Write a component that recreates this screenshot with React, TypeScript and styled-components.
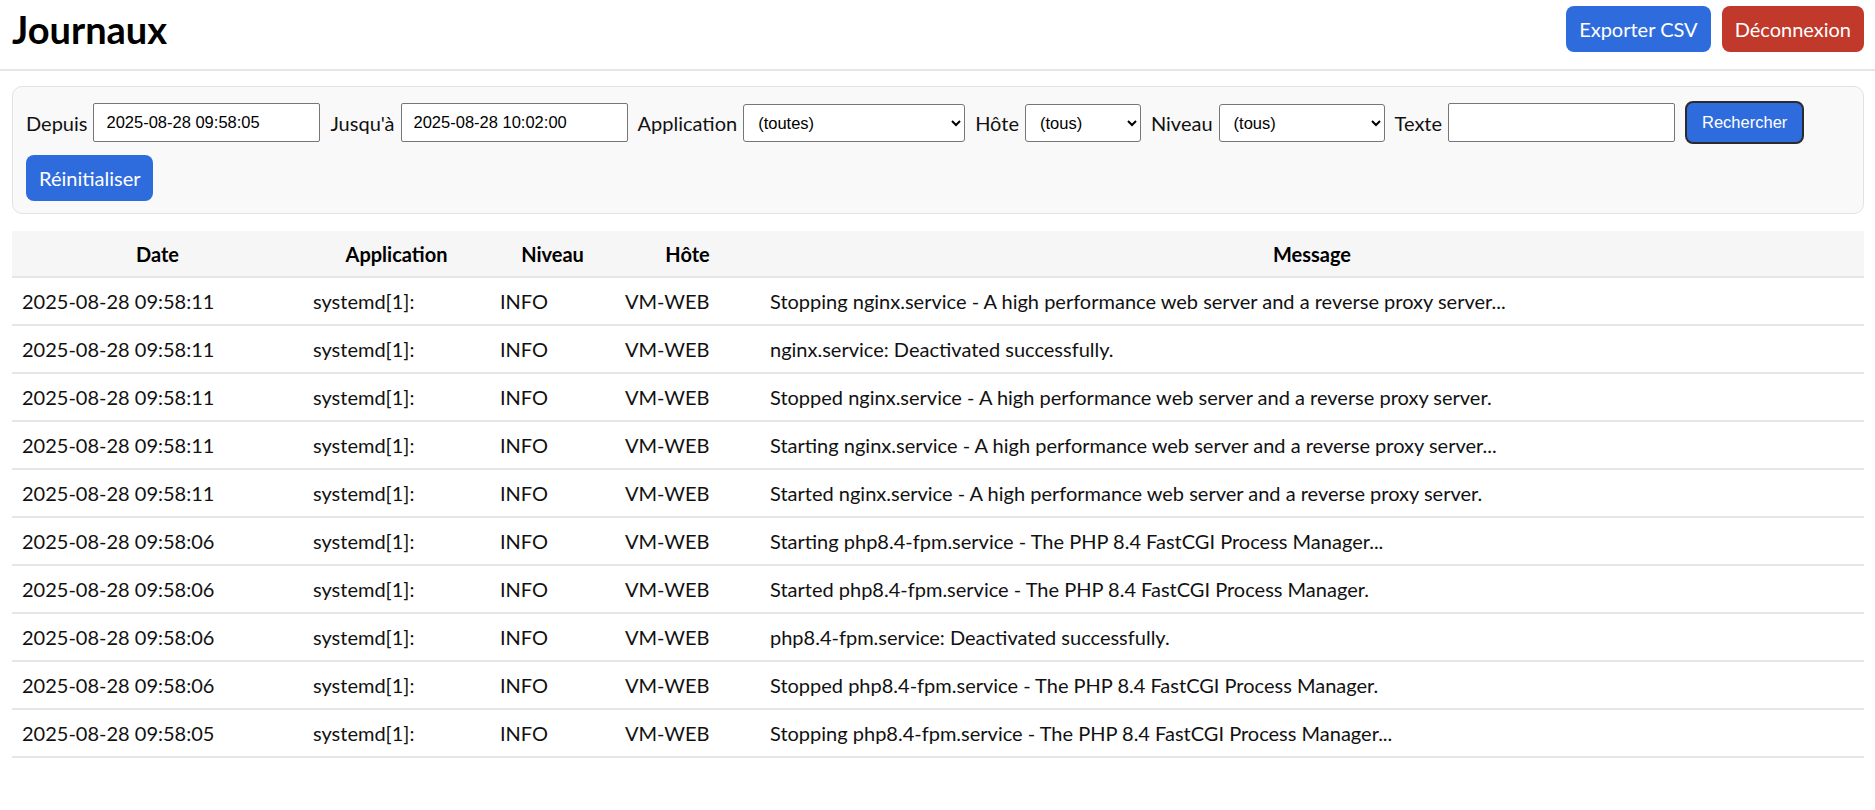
import React, { useState } from "react";
import styled, { createGlobalStyle } from "styled-components";

const GlobalStyle = createGlobalStyle`
  * { box-sizing: border-box; }
  body {
    margin: 0;
    background: #fff;
    color: #111;
    font-family: Lato, "Noto Sans", "Liberation Sans", sans-serif;
    font-size: 20px;
  }
`;

const Page = styled.div`
  padding: 0 11px 0 12px;
`;

const Header = styled.header`
  display: flex;
  align-items: center;
  justify-content: space-between;
  height: 71px;
  padding: 0 11px 11px 12px;
  margin: 0 -11px 0 -12px;
  border-bottom: 2px solid #e6e6e6;
`;

const Title = styled.h1`
  margin: 0;
  font-size: 38px;
  font-weight: 700;
  color: #000;
`;

const Actions = styled.div`
  display: flex;
  gap: 11px;
`;

const Button = styled.button<{ $tone?: "blue" | "red" }>`
  height: 46px;
  padding: 0 13px;
  border: none;
  border-radius: 8px;
  background: ${(p) => (p.$tone === "red" ? "#c0392b" : "#2e6cde")};
  color: #fff;
  font-family: inherit;
  font-size: 20px;
  cursor: pointer;
`;

const Panel = styled.section`
  margin-top: 15px;
  padding: 14px 13px 12px;
  background: #f9f9f9;
  border: 1px solid #e2e2e2;
  border-radius: 10px;
`;

const Filters = styled.form`
  display: flex;
  flex-wrap: wrap;
  align-items: center;
  column-gap: 10px;
  row-gap: 11px;
`;

const Field = styled.label`
  display: flex;
  align-items: center;
  gap: 6px;
`;

const TextInput = styled.input<{ $w: number }>`
  width: ${(p) => p.$w}px;
  height: 39px;
  padding: 0 12px;
  border: 1px solid #767676;
  border-radius: 2px;
  background: #fff;
  font-family: "Liberation Sans", Arial, sans-serif;
  font-size: 16.5px;
  color: #000;
`;

const Select = styled.select<{ $w: number }>`
  width: ${(p) => p.$w}px;
  height: 38px;
  padding: 0 10px;
  border: 1px solid #767676;
  border-radius: 3px;
  background: #fff;
  font-family: "Liberation Sans", Arial, sans-serif;
  font-size: 16.5px;
  color: #000;
`;

const SearchButton = styled.button`
  height: 43px;
  padding: 0 15px;
  border: 2px solid #2b2b2b;
  border-radius: 8px;
  background: #2e6cde;
  color: #fff;
  font-family: "Liberation Sans", Arial, sans-serif;
  font-size: 16.5px;
  cursor: pointer;
`;

const Table = styled.table`
  width: 100%;
  margin-top: 17px;
  border-collapse: collapse;
  table-layout: fixed;
`;

const HeadCell = styled.th`
  height: 46px;
  padding: 0 10px;
  background: #f6f6f6;
  border-bottom: 2px solid #e6e6e6;
  font-weight: 700;
  text-align: center;
  color: #000;
`;

const Row = styled.tr`
  border-bottom: 2px solid #e6e6e6;
`;

const Cell = styled.td`
  height: 48px;
  padding: 0 10px;
  white-space: nowrap;
  overflow: hidden;
  text-overflow: ellipsis;
  color: #111;
`;

const columns = [
  { label: "Date", width: 291 },
  { label: "Application", width: 187 },
  { label: "Niveau", width: 125 },
  { label: "Hôte", width: 145 },
  { label: "Message", width: undefined },
];

const logs = [
  ["2025-08-28 09:58:11", "Stopping nginx.service - A high performance web server and a reverse proxy server..."],
  ["2025-08-28 09:58:11", "nginx.service: Deactivated successfully."],
  ["2025-08-28 09:58:11", "Stopped nginx.service - A high performance web server and a reverse proxy server."],
  ["2025-08-28 09:58:11", "Starting nginx.service - A high performance web server and a reverse proxy server..."],
  ["2025-08-28 09:58:11", "Started nginx.service - A high performance web server and a reverse proxy server."],
  ["2025-08-28 09:58:06", "Starting php8.4-fpm.service - The PHP 8.4 FastCGI Process Manager..."],
  ["2025-08-28 09:58:06", "Started php8.4-fpm.service - The PHP 8.4 FastCGI Process Manager."],
  ["2025-08-28 09:58:06", "php8.4-fpm.service: Deactivated successfully."],
  ["2025-08-28 09:58:06", "Stopped php8.4-fpm.service - The PHP 8.4 FastCGI Process Manager."],
  ["2025-08-28 09:58:05", "Stopping php8.4-fpm.service - The PHP 8.4 FastCGI Process Manager..."],
];

function App() {
  const [filters, setFilters] = useState({
    since: "2025-08-28 09:58:05",
    until: "2025-08-28 10:02:00",
    app: "",
    host: "",
    level: "",
    text: "",
  });

  const update = (e: React.ChangeEvent<HTMLInputElement | HTMLSelectElement>) => {
    const { name, value } = e.target;
    setFilters((prev) => ({ ...prev, [name]: value }));
  };

  return (
    <Page>
      <GlobalStyle />
      <Header>
        <Title>Journaux</Title>
        <Actions>
          <Button type="button">Exporter CSV</Button>
          <Button type="button" $tone="red">
            Déconnexion
          </Button>
        </Actions>
      </Header>

      <Panel>
        <Filters onSubmit={(e) => e.preventDefault()}>
          <Field>
            Depuis
            <TextInput $w={227} name="since" value={filters.since} onChange={update} />
          </Field>
          <Field>
            Jusqu'à
            <TextInput $w={227} name="until" value={filters.until} onChange={update} />
          </Field>
          <Field>
            Application
            <Select $w={222} name="app" value={filters.app} onChange={update}>
              <option value="">(toutes)</option>
              <option value="systemd">systemd[1]:</option>
            </Select>
          </Field>
          <Field>
            Hôte
            <Select $w={116} name="host" value={filters.host} onChange={update}>
              <option value="">(tous)</option>
              <option value="VM-WEB">VM-WEB</option>
            </Select>
          </Field>
          <Field>
            Niveau
            <Select $w={166} name="level" value={filters.level} onChange={update}>
              <option value="">(tous)</option>
              <option value="INFO">INFO</option>
            </Select>
          </Field>
          <Field>
            Texte
            <TextInput $w={227} name="text" value={filters.text} onChange={update} />
          </Field>
          <SearchButton type="submit">Rechercher</SearchButton>
          <Button type="button">Réinitialiser</Button>
        </Filters>
      </Panel>

      <Table>
        <colgroup>
          {columns.map((c) => (
            <col key={c.label} style={c.width ? { width: c.width } : undefined} />
          ))}
        </colgroup>
        <thead>
          <tr>
            {columns.map((c) => (
              <HeadCell key={c.label}>{c.label}</HeadCell>
            ))}
          </tr>
        </thead>
        <tbody>
          {logs.map(([date, message], i) => (
            <Row key={i}>
              <Cell>{date}</Cell>
              <Cell>systemd[1]:</Cell>
              <Cell>INFO</Cell>
              <Cell>VM-WEB</Cell>
              <Cell>{message}</Cell>
            </Row>
          ))}
        </tbody>
      </Table>
    </Page>
  );
}

export default App;
